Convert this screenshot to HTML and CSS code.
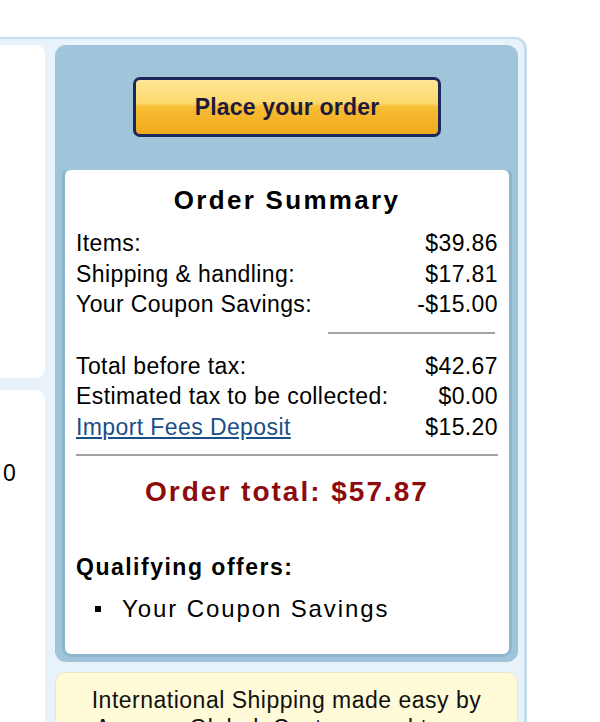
FILE: index.html
```html
<!DOCTYPE html>
<html lang="en">
<head>
    <meta charset="UTF-8">
    <meta name="viewport" content="width=device-width, initial-scale=1.0">
    <title>Place your order</title>
    <link rel="stylesheet" href="styles.css">
</head>
<body>

    <div class="checkout">
        <div class="side">
            <div class="side-panel"></div>
            <div class="side-panel side-lower">0</div>
        </div>

        <div class="summary-col">
            <div class="order-box">
                <button type="button" class="place-order">Place your order</button>

                <div class="summary">
                    <h2>Order Summary</h2>

                    <div class="row"><span>Items:</span><span>$39.86</span></div>
                    <div class="row"><span>Shipping &amp; handling:</span><span>$17.81</span></div>
                    <div class="row"><span>Your Coupon Savings:</span><span>-$15.00</span></div>

                    <hr class="rule rule-short">

                    <div class="row"><span>Total before tax:</span><span>$42.67</span></div>
                    <div class="row"><span>Estimated tax to be collected:</span><span>$0.00</span></div>
                    <div class="row"><a href="#">Import Fees Deposit</a><span>$15.20</span></div>

                    <hr class="rule">

                    <div class="order-total">Order total: $57.87</div>

                    <h3>Qualifying offers:</h3>
                    <ul class="offers">
                        <li>Your Coupon Savings</li>
                    </ul>
                </div>
            </div>

            <div class="shipping-note">
                International Shipping made easy by<br>
                Amazon Global. Customs and taxes
            </div>
        </div>
    </div>

</body>
</html>
```

FILE: styles.css
```css
body {
    margin: 0;
    background-color: #fff;
    font-family: 'Liberation Sans', Arial, sans-serif;
    color: #000;
}

.checkout {
    box-sizing: border-box;
    width: 527px;
    height: 685px;
    margin-top: 37px;
    padding: 6px 6px 0 0;
    display: flex;
    gap: 10px;
    background-color: #e8f2fb;
    border-top: 2px solid #c6dbec;
    border-right: 3px solid #c6dbec;
    border-top-right-radius: 12px;
    overflow: hidden;
}

/* left column, mostly cut off */
.side {
    width: 45px;
    display: flex;
    flex-direction: column;
    gap: 12px;
}

.side-panel {
    height: 333px;
    background-color: #fff;
    border-radius: 0 9px 9px 0;
}

.side-lower {
    flex: 1;
    border-radius: 0 9px 0 0;
    padding: 70px 0 0 3px;
    font-size: 23px;
    line-height: 26px;
}

.summary-col {
    width: 463px;
}

.order-box {
    background-color: #a0c4da;
    border-radius: 11px;
    padding: 32px 6px 5px 7px;
}

.place-order {
    display: block;
    width: 308px;
    height: 60px;
    margin: 0 auto 30px;
    padding: 0;
    border: 3px solid #1a2959;
    border-radius: 7px;
    background: linear-gradient(#fee596 0%, #fcd96f 42%, #f7bd35 50%, #f1a91c 100%);
    color: #1e1a3c;
    font-family: 'Liberation Sans', Arial, sans-serif;
    font-size: 23px;
    font-weight: bold;
    letter-spacing: 0.2px;
    cursor: pointer;
}

.summary {
    background-color: #fff;
    border: 3px solid #8fb6d0;
    border-top-color: #a0c4da;
    border-radius: 9px;
    padding: 14px 11px 29px 11px;
}

.summary h2 {
    margin: 0 0 12px;
    text-align: center;
    font-size: 26px;
    line-height: 32px;
    letter-spacing: 2.3px;
}

.row {
    display: flex;
    justify-content: space-between;
    font-size: 23px;
    line-height: 30.5px;
    letter-spacing: 0.4px;
}

.row a {
    color: #1b4e86;
    text-decoration: underline;
}

.rule {
    height: 2px;
    margin: 12px 0 17px;
    border: 0;
    background-color: #a3a3a3;
}

.rule-short {
    margin-left: 252px;
    margin-right: 3px;
}

.rule + .order-total {
    margin-top: 19px;
}

.order-total {
    text-align: center;
    color: #8e0b0b;
    font-size: 28px;
    font-weight: bold;
    line-height: 34px;
    letter-spacing: 2px;
}

.summary h3 {
    margin: 43px 0 11px;
    font-size: 23px;
    line-height: 30px;
    letter-spacing: 1.5px;
}

.offers {
    margin: 0;
    padding: 0;
    list-style: none;
}

.offers li {
    display: flex;
    align-items: center;
    font-size: 24px;
    line-height: 32px;
    letter-spacing: 1.9px;
}

.offers li::before {
    content: "";
    width: 6px;
    height: 6px;
    margin: 0 21px 0 19px;
    background-color: #000;
}

.shipping-note {
    margin-top: 10px;
    padding: 13px 10px 0;
    height: 80px;
    background-color: #fffbd8;
    border: 1px solid #e4e8cf;
    border-radius: 10px;
    text-align: center;
    font-size: 23px;
    line-height: 28px;
    letter-spacing: 0.5px;
    color: #111;
}
```
